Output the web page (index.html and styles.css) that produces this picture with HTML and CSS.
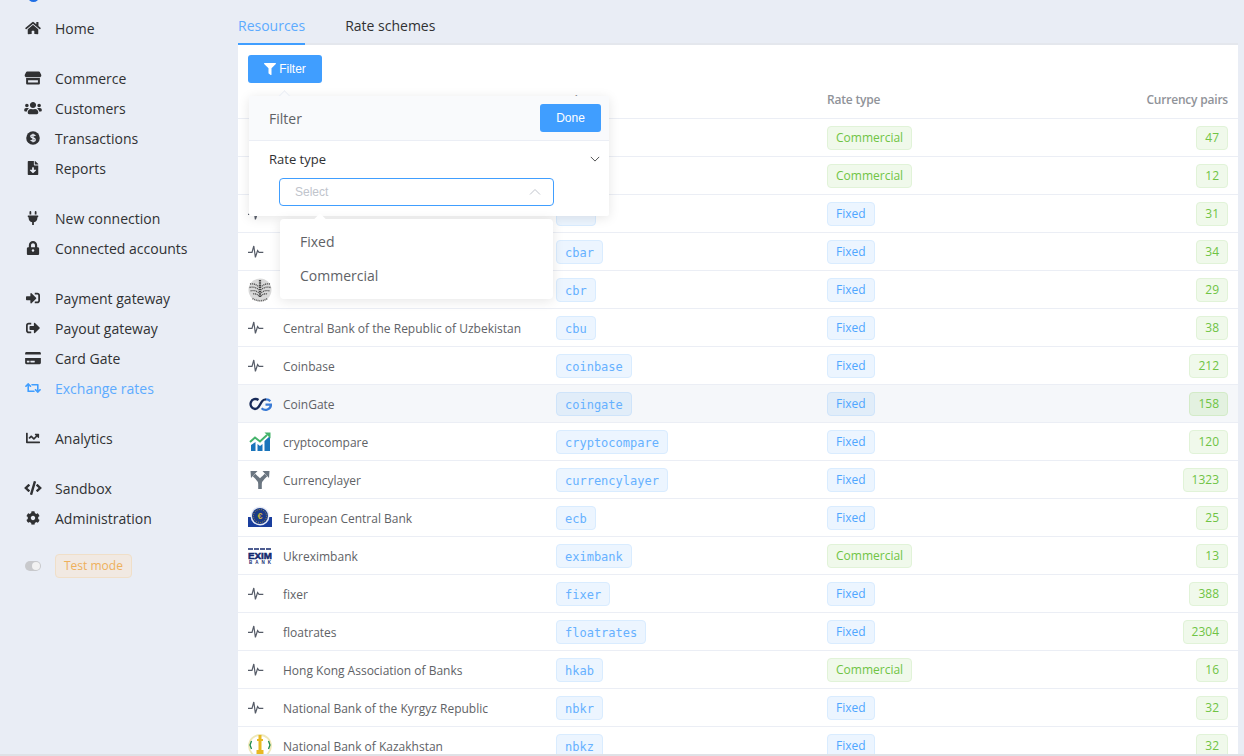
FILE: index.html
```html
<!DOCTYPE html>
<html>
<head>
    <title>Exchange rates</title>
    <meta charset="utf-8">
    <link rel="stylesheet" href="styles.css">
</head>
<body>
    <svg class="sprites" width="0" height="0">
        <symbol id="pulse" viewBox="0 0 24 24">
            <polyline points="0,12.3 4,12.3 5.800,6 7.400,17.300 9.600,10.500 11,12.300 15.300,12.300" fill="none" stroke="#565c68" stroke-width="1.200"/>
        </symbol>
    </svg>
    <div class="app">
        <div class="sidebar">
            <div class="logo"><span></span></div>
            <div class="nav-group">
                <a class="nav-item"><svg viewBox="0 0 576 512"><path d="M280.37 148.26L96 300.11V464a16 16 0 0 0 16 16l112.06-.29a16 16 0 0 0 15.92-16V368a16 16 0 0 1 16-16h64a16 16 0 0 1 16 16v95.64a16 16 0 0 0 16 16.05L464 480a16 16 0 0 0 16-16V300L295.67 148.26a12.19 12.19 0 0 0-15.3 0zM571.6 251.47L488 182.56V44.05a12 12 0 0 0-12-12h-56a12 12 0 0 0-12 12v72.61L318.47 43a48 48 0 0 0-61 0L4.34 251.47a12 12 0 0 0-1.6 16.9l25.5 31A12 12 0 0 0 45.15 301l235.22-193.74a12.19 12.19 0 0 1 15.3 0L530.9 301a12 12 0 0 0 16.9-1.6l25.5-31a12 12 0 0 0-1.7-16.93z"/></svg>Home</a>
            </div>
            <div class="nav-group">
                <a class="nav-item"><svg viewBox="0 0 616 512"><path d="M90 16H526Q548 16 558 36L612 150Q622 200 570 224H46Q-6 200 4 150L58 36Q68 16 90 16zM56 256H560V456Q560 496 520 496H96Q56 496 56 456zM128 336V416H488V336z"/></svg>Commerce</a>
                <a class="nav-item"><svg viewBox="0 0 640 512"><path d="M96 224c35.3 0 64-28.7 64-64s-28.7-64-64-64-64 28.7-64 64 28.7 64 64 64zm448 0c35.3 0 64-28.7 64-64s-28.7-64-64-64-64 28.7-64 64 28.7 64 64 64zm32 32h-64c-17.6 0-33.5 7.1-45.1 18.6 40.3 22.1 68.9 62 75.1 109.4h66c17.7 0 32-14.3 32-32v-32c0-35.3-28.7-64-64-64zm-256 0c61.9 0 112-50.1 112-112S381.9 32 320 32 208 82.1 208 144s50.1 112 112 112zm76.8 32h-8.3c-20.8 10-43.9 16-68.5 16s-47.6-6-68.5-16h-8.3C179.6 288 128 339.6 128 403.2V432c0 26.5 21.5 48 48 48h288c26.5 0 48-21.5 48-48v-28.8c0-63.6-51.6-115.2-115.2-115.2zm-223.7-13.4C161.5 263.1 145.6 256 128 256H64c-35.3 0-64 28.7-64 64v32c0 17.7 14.3 32 32 32h65.9c6.3-47.4 34.9-87.3 75.2-109.4z"/></svg>Customers</a>
                <a class="nav-item"><svg viewBox="0 0 512 512"><circle cx="256" cy="256" r="248"/><path class="cut" d="M340 180Q320 140 256 140Q176 140 176 196Q176 244 256 256Q336 268 336 316Q336 372 256 372Q192 372 172 332M256 100V412" fill="none" stroke-width="48"/></svg>Transactions</a>
                <a class="nav-item"><svg viewBox="0 0 384 512"><path d="M224 136V0H24C10.7 0 0 10.7 0 24v464c0 13.3 10.7 24 24 24h336c13.3 0 24-10.7 24-24V160H248c-13.2 0-24-10.8-24-24zm76.45 211.36l-96.42 95.7c-6.65 6.61-17.39 6.61-24.04 0l-96.42-95.7C73.42 337.29 80.54 320 94.82 320H160v-80c0-8.84 7.16-16 16-16h32c8.84 0 16 7.16 16 16v80h65.18c14.28 0 21.4 17.29 11.27 27.36zM377 105L279.1 7c-4.5-4.5-10.6-7-17-7H256v128h128v-6.1c0-6.3-2.5-12.4-7-16.9z"/></svg>Reports</a>
            </div>
            <div class="nav-group">
                <a class="nav-item"><svg viewBox="0 0 384 512"><path d="M320,32a32,32,0,0,0-64,0v96h64Zm48,128H16A16,16,0,0,0,0,176v32a16,16,0,0,0,16,16H32v32A160.07,160.07,0,0,0,160,412.8V512h64V412.8A160.07,160.07,0,0,0,352,256V224h16a16,16,0,0,0,16-16V176A16,16,0,0,0,368,160ZM128,32a32,32,0,0,0-64,0v96h64Z"/></svg>New connection</a>
                <a class="nav-item"><svg viewBox="0 0 448 512"><path d="M400 224h-24v-72C376 68.2 307.8 0 224 0S72 68.2 72 152v72H48c-26.5 0-48 21.5-48 48v192c0 26.5 21.5 48 48 48h352c26.5 0 48-21.5 48-48V272c0-26.5-21.5-48-48-48zm-104 0H152v-72c0-39.7 32.3-72 72-72s72 32.3 72 72v72z"/><circle class="hole" cx="224" cy="350" r="44"/></svg>Connected accounts</a>
            </div>
            <div class="nav-group">
                <a class="nav-item"><svg viewBox="0 0 512 512"><path d="M416 448h-84c-6.6 0-12-5.4-12-12v-40c0-6.6 5.4-12 12-12h84c17.7 0 32-14.3 32-32V160c0-17.7-14.3-32-32-32h-84c-6.6 0-12-5.4-12-12V76c0-6.6 5.4-12 12-12h84c53 0 96 43 96 96v192c0 53-43 96-96 96zm-47-201L201 79c-15-15-41-4.5-41 17v96H24c-13.3 0-24 10.7-24 24v96c0 13.3 10.7 24 24 24h136v96c0 21.5 26 32 41 17l168-168c9.3-9.4 9.3-24.6 0-34z"/></svg>Payment gateway</a>
                <a class="nav-item"><svg viewBox="0 0 512 512"><path d="M497 273L329 441c-15 15-41 4.5-41-17v-96H152c-13.3 0-24-10.7-24-24v-96c0-13.3 10.7-24 24-24h136V88c0-21.4 25.9-32 41-17l168 168c9.3 9.4 9.3 24.6 0 34zM192 436v-40c0-6.6-5.4-12-12-12H96c-17.7 0-32-14.3-32-32V160c0-17.7 14.3-32 32-32h84c6.6 0 12-5.4 12-12V76c0-6.6-5.4-12-12-12H96c-53 0-96 43-96 96v192c0 53 43 96 96 96h84c6.6 0 12-5.4 12-12z"/></svg>Payout gateway</a>
                <a class="nav-item"><svg viewBox="0 0 576 512"><path d="M0 432c0 26.5 21.5 48 48 48h480c26.5 0 48-21.5 48-48V256H0v176zm192-68c0-6.6 5.4-12 12-12h136c6.6 0 12 5.4 12 12v40c0 6.6-5.4 12-12 12H204c-6.6 0-12-5.4-12-12v-40zm-128 0c0-6.6 5.4-12 12-12h72c6.6 0 12 5.4 12 12v40c0 6.6-5.4 12-12 12H76c-6.6 0-12-5.4-12-12v-40zM576 80v48H0V80c0-26.5 21.5-48 48-48h480c26.5 0 48 21.5 48 48z"/></svg>Card Gate</a>
                <a class="nav-item active"><svg viewBox="0 0 640 512"><path d="M629.657 343.598L528.971 444.284c-9.373 9.372-24.568 9.372-33.941 0L394.343 343.598c-9.373-9.373-9.373-24.569 0-33.941l10.823-10.823c9.562-9.562 25.133-9.34 34.419.492L480 342.118V160H292.451a24.005 24.005 0 0 1-16.971-7.029l-16-16C244.361 121.851 255.069 96 276.451 96H520c13.255 0 24 10.745 24 24v222.118l40.416-42.792c9.285-9.831 24.856-10.054 34.419-.492l10.823 10.823c9.372 9.372 9.372 24.569-.001 33.941zm-265.138 15.431A23.999 23.999 0 0 0 347.548 352H160V169.881l40.416 42.792c9.286 9.831 24.856 10.054 34.419.491l10.822-10.822c9.373-9.373 9.373-24.569 0-33.941L144.971 67.716c-9.373-9.373-24.569-9.373-33.941 0L10.343 168.402c-9.373 9.373-9.373 24.569 0 33.941l10.822 10.822c9.562 9.562 25.133 9.34 34.419-.491L96 169.881V392c0 13.255 10.745 24 24 24h243.549c21.382 0 32.09-25.851 16.971-40.971l-16.001-16z"/></svg>Exchange rates</a>
            </div>
            <div class="nav-group">
                <a class="nav-item"><svg viewBox="0 0 512 512"><path d="M496 384H64V80c0-8.84-7.16-16-16-16H16C7.16 64 0 71.16 0 80v336c0 17.67 14.33 32 32 32h464c8.84 0 16-7.16 16-16v-32c0-8.84-7.16-16-16-16zM464 96H345.94c-21.38 0-32.09 25.85-16.97 40.97l32.4 32.4L288 242.75l-73.37-73.37c-12.5-12.5-32.76-12.5-45.25 0l-68.69 68.69c-6.25 6.25-6.25 16.38 0 22.63l22.62 22.62c6.25 6.25 16.38 6.25 22.63 0L192 237.25l73.37 73.37c12.5 12.5 32.76 12.5 45.25 0l96-96 32.4 32.4c15.12 15.12 40.97 4.41 40.97-16.97V112c.01-8.84-7.15-16-15.99-16z"/></svg>Analytics</a>
            </div>
            <div class="nav-group">
                <a class="nav-item"><svg viewBox="0 0 640 512"><path d="M278.9 511.5l-61-17.7c-6.4-1.8-10-8.5-8.2-14.9L346.2 8.7c1.8-6.4 8.5-10 14.9-8.2l61 17.7c6.4 1.8 10 8.5 8.2 14.9L293.8 503.3c-1.9 6.4-8.5 10.1-14.9 8.2zm-114-112.2l43.5-46.4c4.6-4.9 4.3-12.7-.8-17.2L117 256l90.6-79.7c5.1-4.5 5.5-12.3.8-17.2l-43.5-46.4c-4.5-4.8-12.1-5.1-17-.5L3.8 247.2c-5.1 4.7-5.1 12.8 0 17.5l144.1 135.1c4.9 4.6 12.5 4.4 17-.5zm327.2.6l144.1-135.1c5.1-4.7 5.1-12.8 0-17.5L492.1 112.1c-4.8-4.5-12.4-4.3-17 .5L431.6 159c-4.6 4.9-4.3 12.7.8 17.2L523 256l-90.6 79.7c-5.1 4.5-5.5 12.3-.8 17.2l43.5 46.4c4.5 4.9 12.1 5.1 17 .6z"/></svg>Sandbox</a>
                <a class="nav-item"><svg viewBox="0 0 512 512"><path d="M487.4 315.7l-42.6-24.6c4.3-23.2 4.3-47 0-70.2l42.6-24.6c4.9-2.8 7.1-8.6 5.5-14-11.1-35.6-30-67.8-54.7-94.6-3.8-4.1-10-5.1-14.8-2.3L380.8 110c-17.9-15.4-38.5-27.3-60.8-35.1V25.8c0-5.6-3.9-10.5-9.4-11.7-36.7-8.2-74.3-7.8-109.2 0-5.5 1.2-9.4 6.1-9.4 11.7V75c-22.2 7.9-42.8 19.8-60.8 35.1L88.7 85.5c-4.9-2.8-11-1.9-14.8 2.3-24.7 26.7-43.6 58.9-54.7 94.6-1.7 5.4.6 11.2 5.5 14L67.3 221c-4.3 23.2-4.3 47 0 70.2l-42.6 24.6c-4.9 2.8-7.1 8.6-5.5 14 11.1 35.6 30 67.8 54.7 94.6 3.8 4.1 10 5.1 14.8 2.3l42.6-24.6c17.9 15.4 38.5 27.3 60.8 35.1v49.2c0 5.6 3.9 10.5 9.4 11.7 36.7 8.2 74.3 7.8 109.2 0 5.5-1.2 9.4-6.1 9.4-11.7v-49.2c22.2-7.9 42.8-19.8 60.8-35.1l42.6 24.6c4.9 2.8 11 1.9 14.8-2.3 24.7-26.7 43.6-58.9 54.7-94.6 1.5-5.5-.7-11.3-5.6-14.1zM256 336c-44.1 0-80-35.9-80-80s35.9-80 80-80 80 35.9 80 80-35.9 80-80 80z"/></svg>Administration</a>
            </div>
            <div class="test-mode">
                <span class="toggle"></span>
                <span class="test-tag">Test mode</span>
            </div>
        </div>

        <div class="main">
            <div class="tabs">
                <div class="tab active">Resources</div>
                <div class="tab">Rate schemes</div>
            </div>
            <div class="panel">
                <div class="toolbar">
                    <button class="btn btn-filter"><svg viewBox="0 0 512 512"><path d="M487.976 0H24.028C2.71 0-8.047 25.866 7.058 40.971L192 225.941V432c0 7.831 3.821 15.17 10.237 19.662l80 55.98C298.02 518.69 320 507.493 320 487.98V225.941l184.947-184.97C520.021 25.896 509.338 0 487.976 0z"/></svg>Filter</button>
                </div>
                <table class="rates">
                    <colgroup>
                        <col class="col-name"><col class="col-code"><col class="col-type"><col>
                    </colgroup>
                    <thead>
                        <tr><th class="th-name">Name</th><th class="th-code">Code</th><th>Rate type</th><th class="num">Currency pairs</th></tr>
                    </thead>
                    <tbody>
                        <tr><td></td><td></td><td><span class="tag green">Commercial</span></td><td class="num"><span class="tag green">47</span></td></tr>
                        <tr><td></td><td></td><td><span class="tag green">Commercial</span></td><td class="num"><span class="tag green">12</span></td></tr>
                        <tr><td><div class="name"><svg class="res-icon"><use href="#pulse"/></svg></div></td><td><span class="tag code">&nbsp;&nbsp;&nbsp;</span></td><td><span class="tag">Fixed</span></td><td class="num"><span class="tag green">31</span></td></tr>
                        <tr><td><div class="name"><svg class="res-icon"><use href="#pulse"/></svg></div></td><td><span class="tag code">cbar</span></td><td><span class="tag">Fixed</span></td><td class="num"><span class="tag green">34</span></td></tr>
                        <tr><td><div class="name">
                            <svg class="res-icon" viewBox="0 0 24 24">
                                <circle cx="12" cy="12" r="11.500" fill="#d9d9d9"/>
                                <path d="M12 2V19" stroke="#444" stroke-width="2.200" stroke-dasharray="1.500 .7"/>
                                <path d="M2 6Q7 5 11 9M22 6Q17 5 13 9M1.500 9.500Q7 8 11 12M22.500 9.500Q17 8 13 12M2.500 13Q7 11.500 11 15M21.500 13Q17 11.500 13 15M5 16Q8 15 11 18M19 16Q16 15 13 18" fill="none" stroke="#555" stroke-width="1.300" stroke-dasharray="1.200 .7"/>
                                <path d="M4.500 20.500Q12 25 19.500 20.500" fill="none" stroke="#666" stroke-width="1.600" stroke-dasharray="1 .8"/>
                            </svg>
                        </div></td><td><span class="tag code">cbr</span></td><td><span class="tag">Fixed</span></td><td class="num"><span class="tag green">29</span></td></tr>
                        <tr><td><div class="name"><svg class="res-icon"><use href="#pulse"/></svg>Central Bank of the Republic of Uzbekistan</div></td><td><span class="tag code">cbu</span></td><td><span class="tag">Fixed</span></td><td class="num"><span class="tag green">38</span></td></tr>
                        <tr><td><div class="name"><svg class="res-icon"><use href="#pulse"/></svg>Coinbase</div></td><td><span class="tag code">coinbase</span></td><td><span class="tag">Fixed</span></td><td class="num"><span class="tag green">212</span></td></tr>
                        <tr class="hover"><td><div class="name">
                            <svg class="res-icon" viewBox="0 0 24 24" fill="none" stroke-width="2.300">
                                <path d="M10.500 8A5 5 0 1 0 7 17Q9 17 10.500 15L14 9.300Q15.300 7.300 18 7.300" stroke="#172a58"/>
                                <path d="M18 7.300Q20.800 7.300 22.300 9.200M17.500 12.600H23A5.500 5.500 0 0 1 13.600 16.200" stroke="#3a7bd5"/>
                            </svg>
                            CoinGate</div></td><td><span class="tag code">coingate</span></td><td><span class="tag">Fixed</span></td><td class="num"><span class="tag green">158</span></td></tr>
                        <tr><td><div class="name">
                            <svg class="res-icon" viewBox="0 0 24 24">
                                <path d="M3 21V15L7.500 12V21ZM9.500 21V14L12 16L14.500 14V21ZM16.500 21V11L22 6V21Z" fill="#1b75bb"/>
                                <polyline points="2,12 7,7.500 12,11.500 19,5" fill="none" stroke="#45b36b" stroke-width="2"/>
                                <path d="M16.500 2.500H22.500V8.500Z" fill="#45b36b"/>
                            </svg>
                            cryptocompare</div></td><td><span class="tag code">cryptocompare</span></td><td><span class="tag">Fixed</span></td><td class="num"><span class="tag green">120</span></td></tr>
                        <tr><td><div class="name">
                            <svg class="res-icon" viewBox="0 0 24 24">
                                <path d="M12 21V16Q12 12.500 9 10L6 7M12 16Q12 12.500 15 10L18 7" fill="none" stroke="#6b7681" stroke-width="3.600"/>
                                <path d="M2.500 3H9.500L3 10ZM21.500 3H14.500L21 10Z" fill="#6b7681"/>
                            </svg>
                            Currencylayer</div></td><td><span class="tag code">currencylayer</span></td><td><span class="tag">Fixed</span></td><td class="num"><span class="tag green">1323</span></td></tr>
                        <tr><td><div class="name">
                            <svg class="res-icon" viewBox="0 0 24 24">
                                <rect x="0" y="11" width="24" height="10" fill="#1a3e9e"/>
                                <circle cx="12" cy="10" r="9.500" fill="#e4e9f6"/>
                                <circle cx="12" cy="10" r="8" fill="#1b3a88"/>
                                <circle cx="12" cy="10" r="6.500" fill="none" stroke="#b9a23c" stroke-width=".8" stroke-dasharray="1 1.200"/>
                                <text class="euro" x="12" y="13">€</text>
                            </svg>
                            European Central Bank</div></td><td><span class="tag code">ecb</span></td><td><span class="tag">Fixed</span></td><td class="num"><span class="tag green">25</span></td></tr>
                        <tr><td><div class="name">
                            <svg class="res-icon" viewBox="0 0 24 24">
                                <path d="M0 5H24" stroke="#14296e" stroke-width="1.600" stroke-dasharray="5 1"/>
                                <text class="exim" x="12" y="15" textLength="24" lengthAdjust="spacingAndGlyphs">EXIM</text>
                                <text class="exim-sub" x="12" y="20" textLength="22">BANK</text>
                            </svg>
                            Ukreximbank</div></td><td><span class="tag code">eximbank</span></td><td><span class="tag green">Commercial</span></td><td class="num"><span class="tag green">13</span></td></tr>
                        <tr><td><div class="name"><svg class="res-icon"><use href="#pulse"/></svg>fixer</div></td><td><span class="tag code">fixer</span></td><td><span class="tag">Fixed</span></td><td class="num"><span class="tag green">388</span></td></tr>
                        <tr><td><div class="name"><svg class="res-icon"><use href="#pulse"/></svg>floatrates</div></td><td><span class="tag code">floatrates</span></td><td><span class="tag">Fixed</span></td><td class="num"><span class="tag green">2304</span></td></tr>
                        <tr><td><div class="name"><svg class="res-icon"><use href="#pulse"/></svg>Hong Kong Association of Banks</div></td><td><span class="tag code">hkab</span></td><td><span class="tag green">Commercial</span></td><td class="num"><span class="tag green">16</span></td></tr>
                        <tr><td><div class="name"><svg class="res-icon"><use href="#pulse"/></svg>National Bank of the Kyrgyz Republic</div></td><td><span class="tag code">nbkr</span></td><td><span class="tag">Fixed</span></td><td class="num"><span class="tag green">32</span></td></tr>
                        <tr><td><div class="name">
                            <svg class="res-icon" viewBox="0 0 24 24">
                                <circle cx="12" cy="12" r="11" fill="none" stroke="#efe8b8" stroke-width="1.800"/>
                                <path d="M3.500 7L2 11L3.500 15M20.500 7L22 11L20.500 15M7 21Q12 23.500 17 21" fill="none" stroke="#1c8a4c" stroke-width="1.300"/>
                                <path d="M10.500 1H13.500V5H15V7H13.500V16H15.500V21H8.500V16H10.500V7H9V5H10.500Z" fill="#e8b923"/>
                            </svg>
                            National Bank of Kazakhstan</div></td><td><span class="tag code">nbkz</span></td><td><span class="tag">Fixed</span></td><td class="num"><span class="tag green">32</span></td></tr>
                    </tbody>
                </table>
            </div>

            <div class="popover">
                <div class="popover-head">
                    <span>Filter</span>
                    <button class="btn">Done</button>
                </div>
                <div class="popover-body">
                    <div class="field-title">
                        <span>Rate type</span>
                        <svg viewBox="0 0 12 12"><polyline points="1,3.500 6,8.500 11,3.500"/></svg>
                    </div>
                    <div class="select">
                        <span>Select</span>
                        <svg viewBox="0 0 12 12"><polyline points="1,8.500 6,3.500 11,8.500"/></svg>
                    </div>
                </div>
            </div>
            <div class="dropdown">
                <div class="dropdown-item">Fixed</div>
                <div class="dropdown-item">Commercial</div>
            </div>
        </div>
    </div>
    <div class="page-edge"></div>
</body>
</html>
```

FILE: styles.css
```css
* { margin: 0; padding: 0; box-sizing: border-box; }
body { font-family: "Open Sans", sans-serif; background: #e9edf5; color: #303133; height: 100vh; overflow: hidden; }
.sprites { display: block; height: 0; }
.app { display: flex; height: 754px; overflow: hidden; }
.page-edge { height: 2px; background: #dfe1e6; }

/* sidebar */
.sidebar { width: 238px; flex-shrink: 0; }
.logo { height: 13px; overflow: hidden; padding-left: 28px; }
.logo span { display: block; width: 11px; height: 11px; margin-top: -9px; border-radius: 50%; background: #1f6fe5; }
.nav-group { margin-bottom: 20px; }
.nav-item { display: flex; align-items: center; height: 30px; padding-left: 24px; font-size: 14px; color: #303133; }
.nav-item svg { width: 18px; height: 14px; margin-right: 13px; fill: #303133; flex-shrink: 0; }
.nav-item svg .cut { stroke: #e9edf5; }
.nav-item svg .hole { fill: #e9edf5; }
.nav-item.active { color: #5dabff; }
.nav-item.active svg { width: 16px; margin: 0 14px 0 1px; fill: #409eff; }
.test-mode { display: flex; align-items: center; padding-left: 25px; margin-top: 21px; }
.toggle { width: 16px; height: 10px; margin-right: 14px; border-radius: 5px; background: #c8c9cc; position: relative; }
.toggle::after { content: ""; position: absolute; right: 1px; top: 1px; width: 8px; height: 8px; border-radius: 50%; background: #f2f2f2; }
.test-tag { height: 24px; padding: 0 8px; line-height: 22px; font-size: 12px; color: #eeb05c; background: #f1e9e2; border: 1px solid #f0dfc8; border-radius: 4px; }

/* tabs and table */
.main { width: 1000px; position: relative; }
.tabs { display: flex; height: 45px; gap: 40px; border-bottom: 2px solid #e4e7ed; }
.tab { height: 45px; padding-top: 8px; line-height: 36px; font-size: 14px; color: #303133; }
.tab.active { color: #5dabff; border-bottom: 2px solid #409eff; }
.panel { background: #fff; height: 709px; overflow: hidden; }
.toolbar { padding: 10px 10px 0; }
.btn { height: 28px; padding: 0 20px; border: none; border-radius: 3px; background: #409eff; color: #fff; font-family: "Liberation Sans", sans-serif; font-size: 12px; }
.btn-filter { display: flex; align-items: center; justify-content: center; width: 74px; padding: 0; }
.btn-filter svg { width: 12px; height: 12px; margin-right: 3px; fill: #fff; }

.rates { width: 1000px; table-layout: fixed; border-collapse: separate; border-spacing: 0; }
.col-name { width: 308px; }
.col-code { width: 271px; }
.col-type { width: 280px; }
.rates th { height: 36px; padding: 0 10px 2px; text-align: left; font-size: 12px; font-weight: 600; letter-spacing: -0.2px; color: #909399; border-bottom: 1px solid #ebeef5; }
.rates .th-name { padding: 0 10px 0 45px; }
.rates .th-code { padding-bottom: 0; }
.rates td { height: 38px; padding: 0 10px; font-size: 12px; color: #606266; border-bottom: 1px solid #ebeef5; }
.rates .num { text-align: right; }
.rates tr.hover td { background: #f5f7fa; }
.name { display: flex; align-items: center; padding-top: 2px; }
.res-icon { width: 24px; height: 24px; margin: 0 11px 2px 0; flex-shrink: 0; }
.euro { font-family: "Liberation Sans", sans-serif; font-size: 9px; font-weight: 700; fill: #d1b13a; text-anchor: middle; }
.exim { font-family: "Liberation Sans", sans-serif; font-size: 9.500px; font-weight: 700; fill: #14296e; stroke: #14296e; stroke-width: .5; text-anchor: middle; }
.exim-sub { font-family: "Liberation Sans", sans-serif; font-size: 4.500px; font-weight: 700; fill: #14296e; text-anchor: middle; }

.tag { display: inline-block; height: 24px; padding: 0 8px; line-height: 22px; font-size: 12px; white-space: nowrap; vertical-align: middle; color: #4fa6ff; background: #ecf5ff; border: 1px solid #d9ecff; border-radius: 4px; }
.tag.green { color: #6fc444; background: #f0f9eb; border-color: #e1f3d8; }
.tag.code { font-family: "DejaVu Sans Mono", monospace; line-height: 24px; color: #66b1ff; }
.hover .tag { background: #e1edf9; border-color: #cfe4fa; }
.hover .tag.green { background: #e3f1e0; border-color: #d3ebc8; }

/* filter popover */
.popover { position: absolute; left: 11px; top: 96px; width: 360px; height: 120px; background: #fff; border-radius: 2px; box-shadow: 0 2px 12px rgba(0,0,0,0.1); }
.popover::before { content: ""; position: absolute; left: 31px; top: -4px; width: 8px; height: 8px; background: #f9fafc; border-left: 1px solid #ebeef5; border-top: 1px solid #ebeef5; transform: rotate(45deg); }
.popover-head { position: relative; display: flex; align-items: flex-start; justify-content: space-between; height: 45px; padding: 8px 8px 0 20px; background: #f9fafc; border-bottom: 1px solid #ebeef5; font-size: 14px; line-height: 30px; color: #606266; }
.popover-head .btn { width: 61px; padding: 0; font-size: 12px; }
.popover-body { padding: 8px 9px 0 20px; }
.field-title { display: flex; align-items: center; justify-content: space-between; height: 20px; font-size: 13px; color: #303133; }
.field-title svg { width: 10px; height: 10px; fill: none; stroke: #303133; stroke-width: 1; }
.select { display: flex; align-items: center; justify-content: space-between; width: 275px; height: 28px; margin: 9px 0 0 10px; padding: 0 12px 0 15px; border: 1px solid #409eff; border-radius: 4px; font-family: "Liberation Sans", sans-serif; font-size: 12px; color: #c0c4cc; }
.select svg { width: 12px; height: 12px; fill: none; stroke: #c0c4cc; stroke-width: 1; }

.dropdown { position: absolute; left: 42px; top: 219px; width: 273px; height: 80px; padding: 6px 0; background: #fff; border-radius: 4px; box-shadow: 0 2px 12px rgba(0,0,0,0.1); }
.dropdown::before { content: ""; position: absolute; left: 36px; top: -4px; width: 8px; height: 8px; background: #fff; transform: rotate(45deg); }
.dropdown-item { position: relative; height: 34px; line-height: 34px; padding-left: 20px; font-size: 14px; color: #606266; }
```
